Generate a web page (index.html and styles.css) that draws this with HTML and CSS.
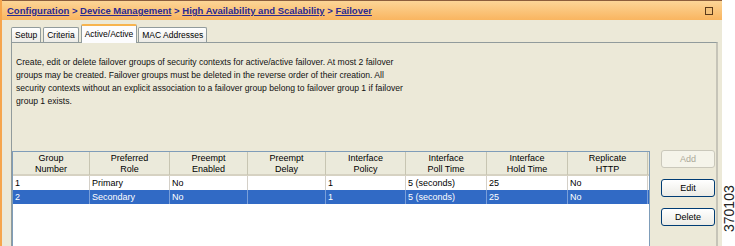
FILE: index.html
```html
<!DOCTYPE html>
<html lang="en">
<head>
    <meta charset="UTF-8">
    <title>Failover</title>
    <link rel="stylesheet" href="styles.css">
</head>
<body>
    <div class="window">
        <div class="titlebar">
            <div class="crumbs">
                <a href="#">Configuration</a> &gt; <a href="#">Device Management</a> &gt; <a href="#">High Availability and Scalability</a> &gt; <a href="#">Failover</a>
            </div>
            <span class="max-box"></span>
        </div>
        <div class="content">
            <div class="tabs">
                <div class="tab">Setup</div>
                <div class="tab">Criteria</div>
                <div class="tab active">Active/Active</div>
                <div class="tab">MAC Addresses</div>
            </div>
            <div class="panel">
                <p class="desc">Create, edit or delete failover groups of security contexts for active/active failover. At most 2 failover groups may be created. Failover groups must be deleted in the reverse order of their creation. All security contexts without an explicit association to a failover group belong to failover group 1 if failover group 1 exists.</p>
                <div class="groups">
                    <div class="grid">
                        <div class="row head">
                            <div>Group<br>Number</div>
                            <div>Preferred<br>Role</div>
                            <div>Preempt<br>Enabled</div>
                            <div>Preempt<br>Delay</div>
                            <div>Interface<br>Policy</div>
                            <div>Interface<br>Poll Time</div>
                            <div>Interface<br>Hold Time</div>
                            <div>Replicate<br>HTTP</div>
                        </div>
                        <div class="row">
                            <div>1</div><div>Primary</div><div>No</div><div></div>
                            <div>1</div><div>5 (seconds)</div><div>25</div><div>No</div>
                        </div>
                        <div class="row selected">
                            <div>2</div><div>Secondary</div><div>No</div><div></div>
                            <div>1</div><div>5 (seconds)</div><div>25</div><div>No</div>
                        </div>
                    </div>
                    <div class="actions">
                        <button disabled>Add</button>
                        <button>Edit</button>
                        <button>Delete</button>
                    </div>
                </div>
            </div>
        </div>
    </div>
    <div class="side"><span>370103</span></div>
</body>
</html>
```

FILE: styles.css
```css
body {
    margin: 0;
    width: 735px;
    height: 246px;
    overflow: hidden;
    display: flex;
    background: white;
    font-family: "Liberation Sans", Arial, sans-serif;
    font-size: 9px;
    color: #000;
}
.window {
    width: 720px;
    height: 246px;
    background: #ece9d8;
    border-left: 2px solid #f6a54c;
    display: flex;
    flex-direction: column;
}
.titlebar {
    height: 19px;
    border-top: 1px solid #8c5e3c;
    background: linear-gradient(#fcd597, #f9b560);
    display: flex;
    align-items: center;
    justify-content: space-between;
    padding: 0 9px 0 5px;
}
.crumbs {
    font-weight: bold;
    font-size: 9.5px;
    color: #2a2a90;
}
.crumbs a {
    color: #2a2a90;
}
.max-box {
    width: 6px;
    height: 6px;
    border: 1px solid #5b3a1a;
    background: #f3c27c;
}
.content {
    padding: 5px 4px 0 9px;
    flex: 1;
    display: flex;
    flex-direction: column;
}
.tabs {
    display: flex;
    align-items: flex-end;
    height: 17px;
    font-size: 8.5px;
}
.tab {
    height: 14px;
    line-height: 14px;
    padding: 0 3px;
    margin-right: 2px;
    border: 1px solid #919b9c;
    border-bottom: none;
    border-radius: 2px 2px 0 0;
    background: linear-gradient(#ffffff, #ecebe6);
}
.tab.active {
    height: 17px;
    line-height: 16px;
    margin-right: 1px;
    border-top: 2px solid #f7b44f;
    background: #fcfcfe;
    position: relative;
    top: 1px;
}
.panel {
    flex: 1;
    border: 1px solid #919b9c;
    border-bottom: none;
    border-right: 2px solid #c6c4b8;
    display: flex;
    flex-direction: column;
}
.desc {
    margin: 0;
    height: 95px;
    padding: 13px 0 0 4px;
    width: 393px;
    font-size: 8.6px;
    line-height: 13px;
    color: #111;
}
.groups {
    flex: 1;
    display: flex;
}
.grid {
    width: 636px;
    background: white;
    border: 1px solid #7f9db9;
    border-bottom: none;
}
.row {
    display: grid;
    grid-template-columns: 77px 80px 78px 78px 80px 81px 81px 80px;
    height: 14px;
    line-height: 14px;
}
.row div {
    border-right: 1px solid #d4d0c8;
    padding-left: 2px;
    white-space: nowrap;
}
.row.head {
    height: 22px;
    line-height: 11px;
    background: #ebeadb;
    border-bottom: 2px solid #d6d2c2;
    text-align: center;
}
.row.head div {
    border-right: 1px solid #c7c5b2;
    padding: 1px 0 0;
}
.row.selected {
    background: #316ac5;
    color: white;
}
.row.selected div {
    border-right-color: #7a9fd9;
}
.actions {
    display: flex;
    flex-direction: column;
    gap: 11px;
    padding: 0 0 0 11px;
    margin-top: -1px;
}
.actions button {
    width: 54px;
    height: 18px;
    font-family: inherit;
    font-size: 9px;
    border: 1px solid #003c74;
    border-radius: 3px;
    background: linear-gradient(#ffffff, #ecebe5);
    color: #000;
    padding: 0;
}
.actions button:disabled {
    border-color: #cac8bb;
    background: #f5f4ea;
    color: #aca899;
}
.side {
    flex: 1;
    display: flex;
    justify-content: center;
    padding-top: 180px;
}
.side span {
    writing-mode: vertical-rl;
    transform: rotate(180deg);
    font-size: 14px;
    line-height: 12px;
    height: 52px;
    color: #222;
}
```
